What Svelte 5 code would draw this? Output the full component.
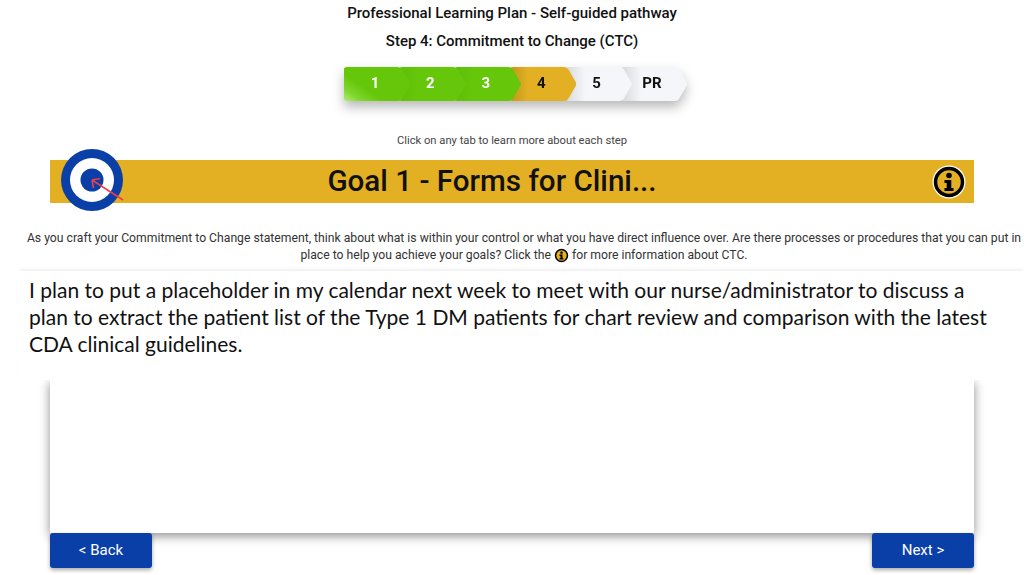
<script>
  const steps = [
    { label: '1', state: 'done' },
    { label: '2', state: 'done' },
    { label: '3', state: 'done' },
    { label: '4', state: 'current' },
    { label: '5', state: 'todo' },
    { label: 'PR', state: 'todo' },
  ];
</script>

{#snippet infoIcon(size)}
  <svg class="info" width={size} height={size} viewBox="0 0 34 34" aria-hidden="true">
    <circle cx="17" cy="17" r="16.5" fill="#fff" />
    <circle cx="17" cy="17" r="13.5" fill="#e3b023" stroke="#000" stroke-width="3.5" />
    <circle cx="17" cy="10.5" r="2.8" fill="#000" />
    <path d="M12.5 15h6.8v8h2.2v3h-9v-3h2.2v-5h-2.2z" fill="#000" />
  </svg>
{/snippet}

<div class="page">
  <header class="head">
    <h1>Professional Learning Plan - Self-guided pathway</h1>
    <h2>Step 4: Commitment to Change (CTC)</h2>
  </header>

  <nav class="stepper">
    {#each steps as step, i}
      <button class="step {step.state}" class:first={i === 0} style="z-index: {steps.length - i}">
        {step.label}
      </button>
    {/each}
  </nav>

  <p class="hint">Click on any tab to learn more about each step</p>

  <section class="banner">
    <svg class="target" width="64" height="64" viewBox="0 0 64 64" aria-hidden="true">
      <circle cx="32" cy="32" r="31" fill="#0a3fa8" />
      <circle cx="32" cy="32" r="22" fill="#fff" />
      <circle cx="32" cy="32" r="11.5" fill="#0a3fa8" />
      <path d="M63 52 32 32M32 32l8-1.5M32 32l1.5 8" fill="none" stroke="#ee3d4a" stroke-width="1.6" />
    </svg>
    <h3>Goal 1 - Forms for Clini...</h3>
    <span class="banner-info">{@render infoIcon(34)}</span>
  </section>

  <p class="intro">
    As you craft your Commitment to Change statement, think about what is within your control or what you have direct influence over. Are there processes or procedures that you can put in place to help you achieve your goals? Click the {@render infoIcon(15)} for more information about CTC.
  </p>

  <div class="statement">
    <p>I plan to put a placeholder in my calendar next week to meet with our nurse/administrator to discuss a plan to extract the patient list of the Type 1 DM patients for chart review and comparison with the latest CDA clinical guidelines.</p>
  </div>

  <div class="card"></div>

  <footer class="actions">
    <button class="nav-btn">&lt; Back</button>
    <button class="nav-btn">Next &gt;</button>
  </footer>
</div>

<style>
  :global(body) {
    background: #fff;
    font-family: Roboto, "Liberation Sans", sans-serif;
    overflow: hidden;
  }

  .page {
    height: 575px;
    display: flex;
    flex-direction: column;
    color: #111;
  }

  .head {
    text-align: center;
    padding-top: 4px;
  }

  h1, h2 {
    margin: 0;
    font-size: 15px;
    font-weight: 500;
    line-height: 18px;
  }

  h2 {
    margin-top: 10px;
  }

  .stepper {
    display: flex;
    justify-content: center;
    margin: 17px 0 0 7px;
    padding-right: 11px;
    filter: drop-shadow(0 6px 6px rgba(0, 0, 0, 0.28));
  }

  .step {
    position: relative;
    flex: none;
    width: 66.4px;
    height: 34px;
    margin-right: -11px;
    padding: 0 4px 3px 0;
    border: 0;
    font: 700 15px Roboto, sans-serif;
    clip-path: path("M3 0H54Q57 0 58.5 2.5L66 15.5Q67 17 66 18.5L58.5 31.5Q57 34 54 34H3Q0 34 0 31V3Q0 0 3 0Z");
  }

  .done {
    color: #fff;
    background: linear-gradient(90deg, #5fbd09 0, #66c70a 20px);
  }

  .done.first {
    background: linear-gradient(35deg, #b4ec78 0, #7ed62c 16%, #66c70a 34%);
  }

  .current {
    color: #111;
    background: linear-gradient(90deg, #c2961c 0, #e3b023 18px);
  }

  .todo {
    color: #111;
    background: linear-gradient(90deg, #d6d8dc 0, #f4f6f9 20px);
  }

  .hint {
    margin: 33px 0 0;
    text-align: center;
    font-size: 11.2px;
    line-height: 14px;
    color: #444;
  }

  .banner {
    position: relative;
    height: 43px;
    margin: 12px 50px 0;
    padding: 0 40px 2px 0;
    box-sizing: border-box;
    display: flex;
    align-items: center;
    justify-content: center;
    background: #e3b023;
  }

  .banner h3 {
    margin: 0;
    font-size: 29.6px;
    font-weight: 500;
    color: #111;
  }

  .target {
    position: absolute;
    left: 10px;
    top: -12.5px;
  }

  .banner-info {
    position: absolute;
    right: 8px;
    top: 5px;
    display: flex;
  }

  .intro {
    margin: 27px 0 0;
    padding: 0 0 0 24px;
    text-align: center;
    font-size: 12.2px;
    line-height: 17px;
    color: #333;
  }

  .info {
    vertical-align: -4px;
  }

  .statement {
    position: relative;
    z-index: 1;
    height: 109px;
    margin-top: 7px;
    margin-left: 18px;
    padding: 5px 24px 0 11px;
    box-sizing: border-box;
    background: #fff;
    box-shadow: 0 -3px 3px -1px rgba(0, 0, 0, 0.06);
  }

  .statement p {
    margin: 0;
    font: 400 21px/27px Lato, "Open Sans", sans-serif;
    color: #111;
  }

  .card {
    flex: none;
    height: 153px;
    margin: 0 50px;
    background: #fff;
    box-shadow: 0 3px 10px rgba(0, 0, 0, 0.45);
  }

  .actions {
    position: relative;
    display: flex;
    justify-content: space-between;
    margin: 0 50px;
  }

  .nav-btn {
    width: 102px;
    height: 35px;
    padding: 0 0 2px;
    border: 0;
    border-radius: 3px;
    background: #0a3fa8;
    color: #fff;
    font: 400 15px Roboto, sans-serif;
    box-shadow: 0 2px 4px rgba(0, 0, 0, 0.35);
  }
</style>
